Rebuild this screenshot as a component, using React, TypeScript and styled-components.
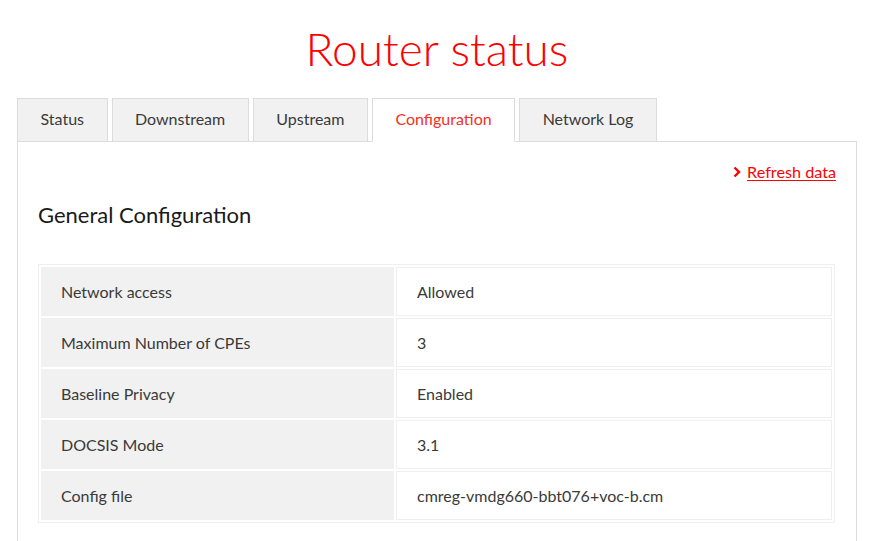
import React from 'react';
import styled, { createGlobalStyle } from 'styled-components';

const GlobalStyle = createGlobalStyle`
  body {
    margin: 0;
    background: #fff;
    font-family: Lato, "Liberation Sans", sans-serif;
    color: #333;
  }
`;

const Page = styled.div`
  width: 840px;
  margin: 0 19px 0 17px;
  padding-top: 22px;
`;

const Title = styled.h1`
  margin: 0 0 22px;
  text-align: center;
  font-size: 46px;
  font-weight: 300;
  line-height: 54px;
  color: #ff0000;
`;

const TabBar = styled.div`
  display: flex;
  gap: 4px;
  margin-bottom: -1px;
`;

const Tab = styled.div<{ $active?: boolean }>`
  height: 44px;
  box-sizing: border-box;
  padding: 0 22.5px 3px;
  display: flex;
  align-items: center;
  font-size: 16px;
  border: 1px solid #dcdcdc;
  border-bottom-color: ${(p) => (p.$active ? '#fff' : '#dcdcdc')};
  background: ${(p) => (p.$active ? '#fff' : '#f1f1f1')};
  color: ${(p) => (p.$active ? '#f5301f' : '#3a3a3a')};
  position: relative;
  z-index: ${(p) => (p.$active ? 1 : 0)};
  cursor: pointer;
`;

const Panel = styled.div`
  border: 1px solid #dcdcdc;
  padding: 20px 20px 24px;
  min-height: 380px;
`;

const RefreshRow = styled.div`
  display: flex;
  justify-content: flex-end;
`;

const RefreshLink = styled.a`
  display: inline-flex;
  align-items: center;
  gap: 6px;
  color: #ff0000;
  font-size: 16.2px;
  text-decoration: underline;
  text-underline-offset: 2px;
  cursor: pointer;
`;

const Heading = styled.h2`
  margin: 20px 0 36px;
  font-size: 22px;
  font-weight: 400;
  color: #1a1a1a;
`;

const Table = styled.table`
  width: 797px;
  border-collapse: separate;
  border-spacing: 2px;
  border: 1px solid #efefef;
`;

const Label = styled.td`
  width: 313px;
  height: 47px;
  padding: 0 20px;
  background: #f1f1f1;
  font-size: 16px;
  color: #3a3a3a;
`;

const Value = styled.td`
  height: 47px;
  padding: 0 20px;
  background: #fff;
  border: 1px solid #efefef;
  font-size: 16px;
  color: #3a3a3a;
`;

const Chevron = () => (
  <svg width="8" height="12" viewBox="0 0 8 12">
    <path d="M1.5 1.5 L6 6 L1.5 10.5" fill="none" stroke="#ff0000" strokeWidth="2.4" />
  </svg>
);

const tabs = ['Status', 'Downstream', 'Upstream', 'Configuration', 'Network Log'];

const rows: [string, string][] = [
  ['Network access', 'Allowed'],
  ['Maximum Number of CPEs', '3'],
  ['Baseline Privacy', 'Enabled'],
  ['DOCSIS Mode', '3.1'],
  ['Config file', 'cmreg-vmdg660-bbt076+voc-b.cm'],
];

export default function App() {
  return (
    <Page>
      <GlobalStyle />
      <Title>Router status</Title>
      <TabBar>
        {tabs.map((t) => (
          <Tab key={t} $active={t === 'Configuration'}>
            {t}
          </Tab>
        ))}
      </TabBar>
      <Panel>
        <RefreshRow>
          <RefreshLink>
            <Chevron />
            Refresh data
          </RefreshLink>
        </RefreshRow>
        <Heading>General Configuration</Heading>
        <Table>
          <tbody>
            {rows.map(([k, v]) => (
              <tr key={k}>
                <Label>{k}</Label>
                <Value>{v}</Value>
              </tr>
            ))}
          </tbody>
        </Table>
      </Panel>
    </Page>
  );
}
